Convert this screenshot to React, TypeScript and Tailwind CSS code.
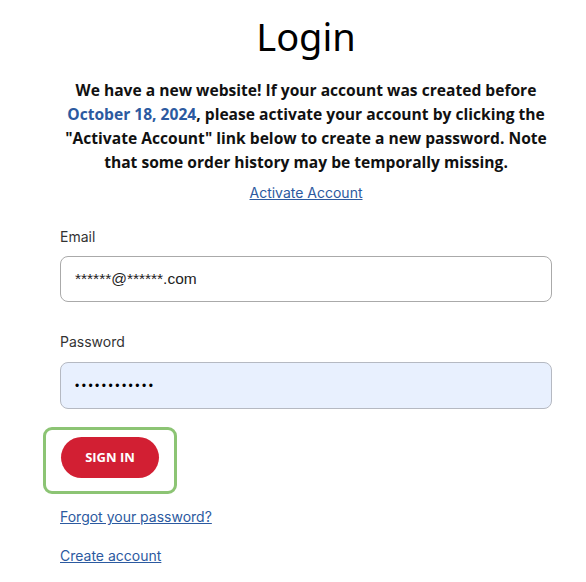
import React, { useState } from 'react';

const App: React.FC = () => {
    const [email, setEmail] = useState('******@******.com');
    const [password, setPassword] = useState('************');

    return (
        <div className="min-h-screen bg-white">
            <div className="ml-[60px] w-[492px] pt-[13px] pb-4">
                {/* Title */}
                <h1 className="text-center text-[38px] leading-[46px] text-black font-['Noto_Sans',sans-serif] font-normal">
                    Login
                </h1>

                {/* Notice */}
                <p className="mt-[19px] -mx-2 text-center text-[15.6px] leading-[24px] font-bold text-[#111] whitespace-nowrap font-['Open_Sans',sans-serif]">
                    We have a new website! If your account was created before<br />
                    <span className="text-[#2c5aa0]">October 18, 2024</span>, please activate your account by clicking the<br />
                    "Activate Account" link below to create a new password. Note<br />
                    that some order history may be temporally missing.
                </p>

                <div className="mt-[6px] text-center">
                    <a href="#" className="text-[14px] leading-[20px] text-[#2c5aa0] underline font-['Inter',sans-serif]">
                        Activate Account
                    </a>
                </div>

                {/* Email */}
                <label className="mt-[23px] block text-[14px] leading-[20px] text-[#333] font-['Inter',sans-serif]">Email</label>
                <input
                    type="text"
                    value={email}
                    onChange={(e) => setEmail(e.target.value)}
                    className="mt-[9px] block w-full h-[46px] px-[14px] rounded-[8px] border border-[#aaa] bg-white text-[15.5px] text-[#222] font-['Liberation_Sans',sans-serif] outline-none"
                />

                {/* Password */}
                <label className="mt-[30px] block text-[14px] leading-[20px] text-[#333] font-['Inter',sans-serif]">Password</label>
                <input
                    type="password"
                    value={password}
                    onChange={(e) => setPassword(e.target.value)}
                    className="mt-[10px] block w-full h-[47px] px-[14px] rounded-[8px] border border-[#b5b9c2] bg-[#e8f0fe] text-[12px] text-black tracking-[2.5px] font-['Liberation_Sans',sans-serif] outline-none"
                />

                {/* Sign in (highlighted) */}
                <div className="mt-[18px] -ml-[17px] inline-block rounded-[9px] border-[3px] border-[#8cc474] pl-[15px] pr-[15px] pt-[7px] pb-[13px]">
                    <button className="h-[41px] w-[98px] rounded-full bg-[#d21f33] text-white text-[13px] font-bold font-['Open_Sans',sans-serif]">
                        SIGN IN
                    </button>
                </div>

                <div className="mt-[10px]">
                    <a href="#" className="text-[14px] leading-[20px] text-[#2c5aa0] underline font-['Inter',sans-serif]">
                        Forgot your password?
                    </a>
                </div>
                <div className="mt-[15px]">
                    <a href="#" className="text-[14px] leading-[20px] text-[#2c5aa0] underline font-['Inter',sans-serif]">
                        Create account
                    </a>
                </div>
            </div>
        </div>
    );
};

export default App;
